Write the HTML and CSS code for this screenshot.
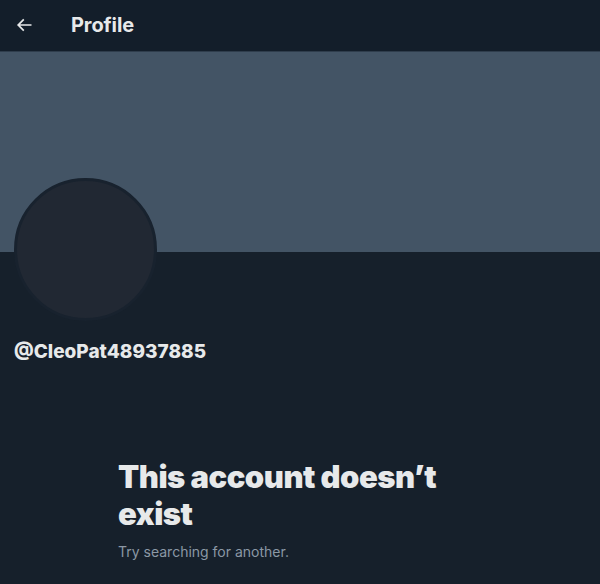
FILE: index.html
```html
<!DOCTYPE html>
<html>
<head>
<meta charset="utf-8">
<link rel="stylesheet" href="styles.css">
</head>
<body>
<div class="page">
  <header class="topbar">
    <svg class="back" viewBox="0 0 24 24" width="20" height="20"><path d="M7.414 13l5.043 5.04-1.414 1.42L3.586 12l7.457-7.46 1.414 1.42L7.414 11H21v2H7.414z" fill="#e7e9ea"/></svg>
    <h1 class="title">Profile</h1>
  </header>
  <div class="banner"></div>
  <section class="info">
    <div class="avatar"></div>
    <div class="handle">@CleoPat48937885</div>
  </section>
  <section class="empty">
    <h2 class="empty-title">This account doesn’t exist</h2>
    <p class="empty-sub">Try searching for another.</p>
  </section>
</div>
</body>
</html>
```

FILE: styles.css
```css
html, body {
  margin: 0;
  padding: 0;
  background: #16202b;
  height: 100%;
  overflow: hidden;
}
.page {
  font-family: "Inter", "Liberation Sans", sans-serif;
  color: #e7e9ea;
}
.topbar {
  height: 51px;
  background: #131e2a;
  display: flex;
  align-items: center;
  padding-left: 14px;
  box-sizing: border-box;
}
.back {
  display: block;
  margin-top: -2px;
}
.title {
  margin: -2px 0 0 37px;
  font-size: 20px;
  font-weight: 700;
  letter-spacing: -0.1px;
}
.banner {
  height: 201px;
  background: #435465;
  border-top: 1px solid #2f3d4c;
  box-sizing: border-box;
}
.info {
  padding: 0 14px;
}
.avatar {
  width: 137px;
  height: 137px;
  border-radius: 50%;
  background: #212833;
  border: 3px solid #18222e;
  margin-top: -74px;
}
.handle {
  margin-top: 19px;
  font-size: 19px;
  font-weight: 800;
  letter-spacing: 0;
}
.empty {
  padding: 0 0 0 118px;
  margin-top: 95px;
}
.empty-title {
  margin: 0;
  font-size: 31px;
  font-weight: 900;
  line-height: 37px;
  letter-spacing: -0.5px;
  width: 340px;
}
.empty-sub {
  margin: 11px 0 0;
  font-size: 14px;
  color: #8b98a5;
}
```
